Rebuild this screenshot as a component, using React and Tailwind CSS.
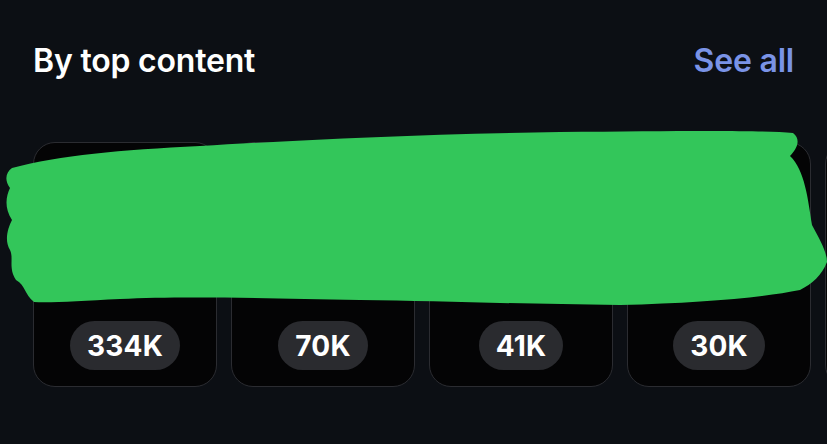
import React from "react";

const stats = ["334K", "70K", "41K", "30K", ""];

const Card = ({ value }) => (
  <div className="w-[184px] h-[245px] flex-none rounded-[22px] border border-[#2b2c31] bg-[#040405] flex flex-col items-center justify-end pb-[16px]">
    {value && (
      <div className="h-[49px] px-[17px] rounded-full bg-[#2a2b2f] flex items-center text-white text-[28px] font-bold tracking-[0.2px]">
        {value}
      </div>
    )}
  </div>
);

const Scribble = () => (
  <svg
    className="absolute left-0 top-0 pointer-events-none"
    width="827"
    height="444"
    viewBox="0 0 827 444"
  >
    <path
      d="M12 168 C 60 155, 120 150, 200 146 C 300 140, 420 134, 560 132 C 680 131, 760 130, 793 133 C 802 140, 796 150, 790 156 C 805 170, 808 200, 812 225 C 820 240, 827 252, 827 262 C 822 275, 812 284, 800 290 C 760 298, 700 303, 620 305 C 520 304, 440 301, 360 300 C 260 298, 180 296, 120 299 C 80 301, 50 303, 34 302 C 24 294, 26 286, 16 280 C 8 268, 14 258, 10 250 C 4 240, 8 228, 12 220 C 4 208, 6 196, 10 188 C 4 180, 6 172, 12 168 Z"
      fill="#33c65a"
    />
  </svg>
);

export default function App() {
  return (
    <div
      className="relative w-[827px] h-[444px] overflow-hidden bg-[#0c0f14]"
      style={{ fontFamily: "Inter, 'Noto Sans', sans-serif" }}
    >
      <div className="flex items-center justify-between px-[33px] pt-[42px]">
        <h2 className="text-white text-[32px] leading-[38px] font-semibold tracking-[-0.2px]">By top content</h2>
        <span className="text-[#7a93e6] text-[32px] leading-[38px] font-semibold tracking-[-0.2px]">See all</span>
      </div>
      <div className="flex gap-[14px] pl-[33px] mt-[62px]">
        {stats.map((s, i) => (
          <Card key={i} value={s} />
        ))}
      </div>
      <Scribble />
    </div>
  );
}
